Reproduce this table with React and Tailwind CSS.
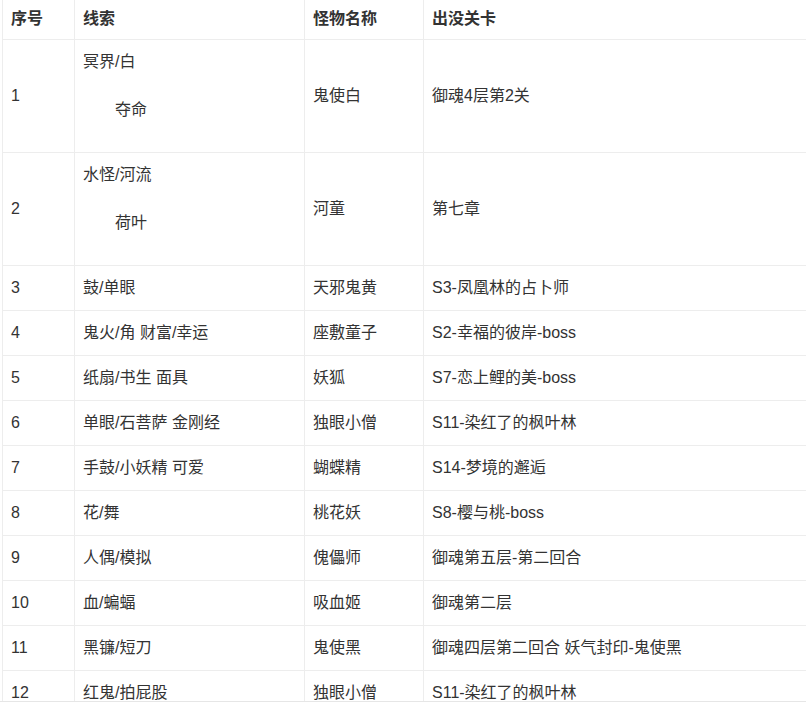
const rows = [
  { no: "1", clue: ["冥界/白", "夺命"], name: "鬼使白", place: "御魂4层第2关" },
  { no: "2", clue: ["水怪/河流", "荷叶"], name: "河童", place: "第七章" },
  { no: "3", clue: "鼓/单眼", name: "天邪鬼黄", place: "S3-凤凰林的占卜师" },
  { no: "4", clue: "鬼火/角 财富/幸运", name: "座敷童子", place: "S2-幸福的彼岸-boss" },
  { no: "5", clue: "纸扇/书生 面具", name: "妖狐", place: "S7-恋上鲤的美-boss" },
  { no: "6", clue: "单眼/石菩萨 金刚经", name: "独眼小僧", place: "S11-染红了的枫叶林" },
  { no: "7", clue: "手鼓/小妖精 可爱", name: "蝴蝶精", place: "S14-梦境的邂逅" },
  { no: "8", clue: "花/舞", name: "桃花妖", place: "S8-樱与桃-boss" },
  { no: "9", clue: "人偶/模拟", name: "傀儡师", place: "御魂第五层-第二回合" },
  { no: "10", clue: "血/蝙蝠", name: "吸血姬", place: "御魂第二层" },
  { no: "11", clue: "黑镰/短刀", name: "鬼使黑", place: "御魂四层第二回合 妖气封印-鬼使黑" },
  { no: "12", clue: "红鬼/拍屁股", name: "独眼小僧", place: "S11-染红了的枫叶林" },
]

const cell = "border border-[#ededed] pl-[8px] pr-2 align-middle"

export default function App() {
  return (
    <div
      className="w-[806px] h-[710px] bg-white overflow-hidden"
      style={{ fontFamily: '"Liberation Sans", "Noto Sans CJK SC", sans-serif' }}
    >
      <div className="h-[702px] overflow-hidden border-b border-[#e6e6e6]">
        <table className="ml-[2px] w-[830px] border-collapse text-[16px] leading-[24px] text-[#333]">
          <colgroup>
            <col className="w-[72px]" />
            <col className="w-[230px]" />
            <col className="w-[119px]" />
            <col />
          </colgroup>
          <thead>
            <tr className="h-[39px]">
              <th className={`${cell} text-left font-bold border-t-0`}>序号</th>
              <th className={`${cell} text-left font-bold border-t-0`}>线索</th>
              <th className={`${cell} text-left font-bold border-t-0`}>怪物名称</th>
              <th className={`${cell} text-left font-bold border-t-0`}>出没关卡</th>
            </tr>
          </thead>
          <tbody>
            {rows.map((r) => (
              <tr key={r.no} className={Array.isArray(r.clue) ? "h-[113px]" : "h-[45px]"}>
                <td className={cell}>{r.no}</td>
                <td className={cell}>
                  {Array.isArray(r.clue) ? (
                    <div className="flex flex-col pb-[19px]">
                      <div>{r.clue[0]}</div>
                      <div className="mt-[24px] indent-[2em]">{r.clue[1]}</div>
                    </div>
                  ) : (
                    r.clue
                  )}
                </td>
                <td className={cell}>{r.name}</td>
                <td className={cell}>{r.place}</td>
              </tr>
            ))}
          </tbody>
        </table>
      </div>
    </div>
  )
}
